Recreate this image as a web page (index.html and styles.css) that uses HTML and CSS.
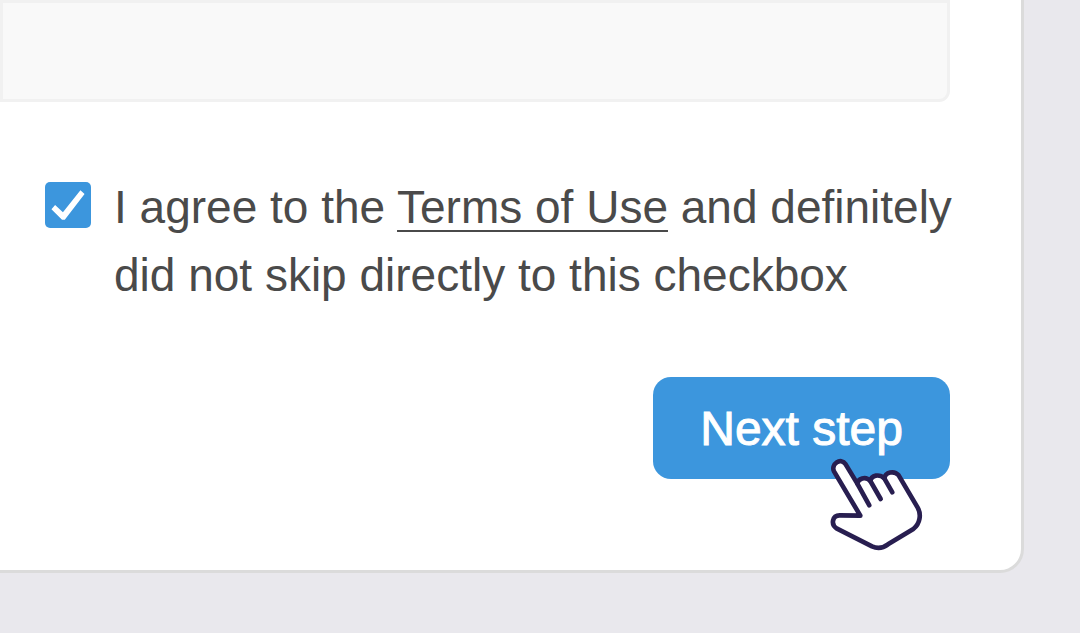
FILE: index.html
```html
<!DOCTYPE html>
<html lang="en">
<head>
    <meta charset="UTF-8">
    <meta name="viewport" content="width=device-width, initial-scale=1.0">
    <title>Terms of Use</title>
    <link rel="stylesheet" href="styles.css">
</head>
<body>
    <form class="card">
        <div class="terms-box"></div>

        <div class="agree">
            <input type="checkbox" id="agree" checked>
            <label for="agree">I agree to the <a href="#">Terms of Use</a> and definitely did not skip directly to this checkbox</label>
        </div>

        <div class="actions">
            <button type="button">Next step</button>
            <svg class="cursor" viewBox="54 51 288 288" aria-hidden="true">
                <path class="hand" d="M151 227 L72 94 C62 73 92 50 107 73 L142 131 C144 117 166 107 181 123 C184 105 208 101 223 115 C226 97 252 90 266 106 L323 203 C334 222 331 251 310 267 L234 313 C217 326 203 327 186 319 L81 266 C61 254 67 226 89 226 Z"/>
                <path class="fingers" d="M142 131 L178 196 M181 123 L212 177 M223 115 L247 157"/>
            </svg>
        </div>
    </form>
</body>
</html>
```

FILE: styles.css
```css
* {
    box-sizing: border-box;
}
body {
    margin: 0;
    min-height: 100vh;
    padding: 0 56px 60px 0;
    background-color: #e9e8ed;
    border-bottom: 1px solid white;
    font-family: "Liberation Sans", Arial, sans-serif;
    font-size: 46px;
    line-height: 68px;
    color: #4a4a4a;
}
.card {
    padding: 0 71px 91px 0;
    background: white;
    border: solid #dbdbdb;
    border-width: 0 3px 3px 0;
    border-radius: 0 0 24px 0;
}
.terms-box {
    height: 102px;
    background: #f9f9f9;
    border: 3px solid #f1f1f1;
    border-radius: 0 0 11px 0;
}
.agree {
    display: flex;
    align-items: flex-start;
    gap: 23px;
    margin: 71px -12px 0 0;
    padding-left: 45px;
}
.agree input {
    appearance: none;
    flex: none;
    width: 46px;
    height: 46px;
    margin: 9px 0 0;
    border-radius: 5px;
    background: #3c96dd;
}
.agree input:checked::before {
    content: "";
    display: block;
    width: 46px;
    height: 46px;
    background: white;
    clip-path: polygon(14% 59%, 22% 50%, 39% 66%, 77% 18%, 86% 26%, 43% 82%, 37% 82%);
}
.agree label {
    flex: 1;
}
.agree a {
    color: inherit;
    text-decoration: underline;
    text-decoration-thickness: 2px;
    text-decoration-skip-ink: none;
    text-underline-offset: 7px;
}
.actions {
    position: relative;
    display: flex;
    justify-content: flex-end;
    margin-top: 68px;
}
.actions button {
    padding: 18px 47px 16px;
    border: none;
    border-radius: 18px;
    background: #3c96dd;
    color: white;
    font: inherit;
    font-size: 48px;
    -webkit-text-stroke: 1px white;
    cursor: pointer;
}
.cursor {
    position: absolute;
    top: 80px;
    right: 26px;
    width: 96px;
    height: 96px;
    stroke: #281e50;
    stroke-width: 14px;
    stroke-linecap: round;
    stroke-linejoin: round;
    pointer-events: none;
}
.hand {
    fill: white;
}
.fingers {
    fill: none;
}
```
